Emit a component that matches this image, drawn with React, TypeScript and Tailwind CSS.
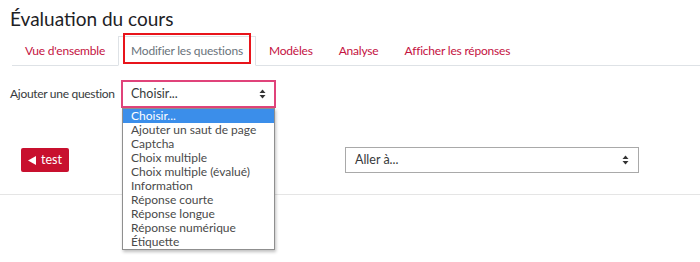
import React from 'react';

const tabs = ['Vue d\'ensemble', 'Modifier les questions', 'Modèles', 'Analyse', 'Afficher les réponses'];

const options = [
  'Choisir...',
  'Ajouter un saut de page',
  'Captcha',
  'Choix multiple',
  'Choix multiple (évalué)',
  'Information',
  'Réponse courte',
  'Réponse longue',
  'Réponse numérique',
  'Étiquette',
];

const Caret: React.FC = () => (
  <svg width="7" height="10" viewBox="0 0 7 10" className="shrink-0">
    <path d="M3.5 0.5 L6.5 4 L0.5 4 Z" fill="#333" />
    <path d="M3.5 9.5 L6.5 6 L0.5 6 Z" fill="#333" />
  </svg>
);

export default function App() {
  return (
    <div className="relative w-[700px] h-[262px] bg-white text-[12px] text-[#373a3c] overflow-hidden" style={{ fontFamily: 'Lato, "Noto Sans", sans-serif' }}>
      {/* Title */}
      <h2 className="pl-[10px] pt-[7px] text-[19px] leading-[24px] text-[#1d2125] whitespace-nowrap">Évaluation du cours</h2>

      {/* Tabs */}
      <div className="ml-[12px] mt-[5px] flex border-b border-[#dee2e6] h-[30px]">
        {tabs.map((t, i) => (
          <div
            key={t}
            className={`relative px-3 flex items-center h-[30px] whitespace-nowrap text-[12px] tracking-[-0.2px] ${
              i === 1
                ? 'border border-[#dee2e6] border-b-white -mb-px bg-white text-[#6a737b]'
                : 'text-[#c4123f] border border-transparent'
            }`}
          >
            {t}
            {i === 1 && (
              <span className="absolute -top-[4px] left-[4px] right-[4px] bottom-[1px] border-2 border-[#e8141b]" />
            )}
          </div>
        ))}
      </div>

      {/* Add question row */}
      <div className="mt-[14px] flex items-center pl-[10px]">
        <span className="w-[111px] whitespace-nowrap text-[12px] tracking-[-0.3px]">Ajouter une question</span>
        <div className="relative">
          <div className="w-[155px] h-[28px] border-2 border-[#e0437a] flex items-center justify-between pl-[8px] pr-[8px] text-[12.5px]">
            <span>Choisir...</span>
            <Caret />
          </div>
          <ul className="absolute z-10 left-[1px] top-[28px] w-[153px] bg-white border border-[#8f8f8f] shadow-[1px_2px_3px_rgba(0,0,0,0.25)] leading-[14px]">
            {options.map((o, i) => (
              <li key={o} className={`pl-[8px] h-[14px] whitespace-nowrap ${i === 0 ? 'bg-[#3b8eea] text-white' : 'text-[#4a4a4a]'}`}>
                {o}
              </li>
            ))}
          </ul>
        </div>
      </div>

      {/* Nav row */}
      <div className="mt-[39px] flex items-center pl-[21px]">
        <button className="h-[24px] px-[7px] flex items-center gap-[5px] bg-[#c8102e] text-white text-[12.5px] rounded-[2px]">
          <svg width="8" height="9" viewBox="0 0 8 9">
            <path d="M0 4.5 L8 0 L8 9 Z" fill="white" />
          </svg>
          test
        </button>
        <div className="ml-[276px] w-[294px] h-[26px] border border-[#a9a9a9] flex items-center justify-between pl-[9px] pr-[9px] text-[12.5px]">
          <span>Aller à...</span>
          <Caret />
        </div>
      </div>

      <div className="mt-[21px] border-t border-[#e5e5e5]" />
    </div>
  );
}
